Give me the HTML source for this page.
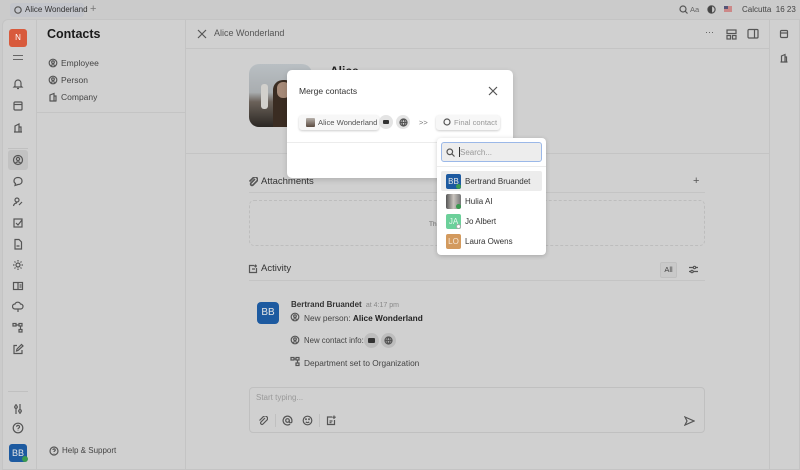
<!DOCTYPE html>
<html><head><meta charset="utf-8"><style>
*{box-sizing:border-box;margin:0;padding:0}
body{width:800px;height:470px;overflow:hidden;background:#cbcbcb;font-family:"Liberation Sans",sans-serif;font-size:8px;color:#333;position:relative}
.a{position:absolute}
svg{position:absolute;fill:none;stroke:#555;stroke-width:1.2}
.t{position:absolute;white-space:nowrap}
</style></head><body>
<div class="a" style="left:10px;top:3px;width:74px;height:14px;background:#c4c6cc;border-radius:3px"></div>
<svg style="left:14px;top:6px" width="8" height="8"><circle cx="4" cy="4" r="3.2"/></svg>
<div class="t" style="left:25px;top:4.5px;font-size:8px;color:#333">Alice Wonderland</div>
<div class="t" style="left:90px;top:3px;font-size:11px;color:#777">+</div>
<svg style="left:679px;top:5px" width="9" height="9"><circle cx="4" cy="4" r="3"/><path d="M6 6l2.5 2.5"/></svg>
<div class="t" style="left:690px;top:5px;font-size:7.5px;color:#666">Aa</div>
<svg style="left:707px;top:5px" width="9" height="9"><circle cx="4.5" cy="4.5" r="3.6"/><path d="M4.5 1v7" /></svg>
<div class="a" style="left:708px;top:6px;width:4px;height:7px;background:#444;border-radius:4px 0 0 4px"></div>
<div class="a" style="left:724px;top:6px;width:8px;height:6px;background:#c88;"></div>
<div class="a" style="left:724px;top:6px;width:4px;height:3px;background:#557"></div>
<div class="t" style="left:742px;top:5px;font-size:8px;color:#444">Calcutta&nbsp; 16 23</div>

<div class="a" style="left:2px;top:19px;width:798px;height:451px;background:#d0d0d0;border-radius:6px 0 0 0;border:1px solid #c4c4c4"></div>
<div class="a" style="left:36px;top:20px;width:1px;height:450px;background:#c4c4c4"></div>
<div class="a" style="left:9px;top:29px;width:18px;height:18px;background:#d85a3c;border-radius:3px;color:#fff;font-size:8px;text-align:center;line-height:18px">N</div>
<div class="a" style="left:13px;top:55px;width:10px;height:1px;background:#666"></div>
<div class="a" style="left:13px;top:59px;width:10px;height:1px;background:#666"></div>
<svg style="left:12px;top:78px" width="12" height="12"><path d="M3 8V5a3 3 0 016 0v3l1 1H2zM5 10.5h2"/></svg>
<svg style="left:12px;top:100px" width="12" height="12"><rect x="2" y="2" width="8" height="8" rx="1"/><path d="M2 4.5h8"/></svg>
<svg style="left:12px;top:122px" width="12" height="12"><path d="M3 10V4l4-2v8M7 5h2v5M2 10h8"/></svg>
<div class="a" style="left:8px;top:148px;width:20px;height:1px;background:#c0c0c0"></div>
<div class="a" style="left:8px;top:150px;width:20px;height:20px;background:#c2c2c2;border-radius:3px"></div>
<svg style="left:12px;top:154px" width="12" height="12"><circle cx="6" cy="6" r="4.5"/><circle cx="6" cy="5" r="1.6"/><path d="M3.3 9.3c1.5-2 3.9-2 5.4 0"/></svg>
<svg style="left:12px;top:175px" width="12" height="12"><path d="M2 6c0-2.5 2-3.5 4-3.5s4 1 4 3.5-2 3.5-4 3.5L3 10.5l.5-2C2.5 8 2 7 2 6z"/></svg>
<svg style="left:12px;top:196px" width="12" height="12"><circle cx="5" cy="4" r="2"/><path d="M1.5 10c.5-2.5 2-3 3.5-3M7 9l3-3"/></svg>
<svg style="left:12px;top:217px" width="12" height="12"><rect x="2" y="2" width="8" height="8"/><path d="M4 6l2 2 4-5"/></svg>
<svg style="left:12px;top:238px" width="12" height="12"><path d="M3 1.5h4l2.5 2.5v7H3z M4.5 8h3"/></svg>
<svg style="left:12px;top:259px" width="12" height="12"><circle cx="6" cy="6" r="2"/><path d="M6 1v1.5M6 9.5V11M1 6h1.5M9.5 6H11M2.5 2.5l1 1M8.5 8.5l1 1M2.5 9.5l1-1M8.5 3.5l1-1"/></svg>
<svg style="left:12px;top:280px" width="12" height="12"><rect x="1.5" y="2.5" width="9" height="7"/><path d="M6 2.5v7M7.5 5h2M7.5 7h2"/></svg>
<svg style="left:12px;top:301px" width="12" height="12"><path d="M3 8a2.5 2.5 0 010-5 3 3 0 015.5 0 2.5 2.5 0 010 5zM6 8v3"/></svg>
<svg style="left:12px;top:322px" width="12" height="12"><rect x="1" y="1.5" width="3" height="2.5"/><rect x="7" y="1.5" width="3" height="2.5"/><rect x="7" y="7.5" width="3" height="2.5"/><path d="M4 3h3M8.5 4v3.5"/></svg>
<svg style="left:12px;top:343px" width="12" height="12"><path d="M5 2.5H2v8h8V7M4.5 8l.5-2 4.5-4.5 1.5 1.5L6 7.5z"/></svg>
<div class="a" style="left:8px;top:391px;width:20px;height:1px;background:#c0c0c0"></div>
<svg style="left:12px;top:403px" width="12" height="12"><path d="M4 1v10M8 1v10"/><circle cx="4" cy="4" r="1.3" fill="#d0d0d0"/><circle cx="8" cy="8" r="1.3" fill="#d0d0d0"/></svg>
<svg style="left:12px;top:422px" width="12" height="12"><circle cx="6" cy="6" r="4.8"/><path d="M4.7 4.8a1.4 1.4 0 112 1.2c-.5.3-.7.6-.7 1.2M6 8.6v.4"/></svg>
<div class="a" style="left:9px;top:444px;width:18px;height:18px;background:#1d5aa0;border-radius:3px;color:#e5e5e5;font-size:9px;text-align:center;line-height:18px">BB</div>
<div class="a" style="left:22px;top:456px;width:6px;height:6px;background:#3a9a50;border-radius:50%"></div>

<div class="a" style="left:185px;top:20px;width:1px;height:450px;background:#c4c4c4"></div>
<div class="t" style="left:47px;top:27px;font-size:12.5px;font-weight:bold;color:#1a1a1a">Contacts</div>
<svg style="left:48px;top:58px" width="10" height="10"><circle cx="5" cy="5" r="3.8"/><circle cx="5" cy="4.2" r="1.3"/><path d="M2.8 7.8c1.2-1.5 3.2-1.5 4.4 0"/></svg>
<div class="t" style="left:61px;top:58px;font-size:8.5px;color:#444">Employee</div>
<svg style="left:48px;top:75px" width="10" height="10"><circle cx="5" cy="5" r="3.8"/><circle cx="5" cy="4.2" r="1.3"/><path d="M2.8 7.8c1.2-1.5 3.2-1.5 4.4 0"/></svg>
<div class="t" style="left:61px;top:75px;font-size:8.5px;color:#444">Person</div>
<svg style="left:48px;top:92px" width="10" height="10"><path d="M2 9V3l4-1.5V9M6 4h2v5M1.5 9h7"/></svg>
<div class="t" style="left:61px;top:92px;font-size:8.5px;color:#444">Company</div>
<div class="a" style="left:37px;top:112px;width:148px;height:1px;background:#c4c4c4"></div>
<svg style="left:49px;top:446px" width="10" height="10"><circle cx="5" cy="5" r="4"/><path d="M4 4a1.1 1.1 0 111.6 1c-.4.3-.6.5-.6 1M5 7.3v.3"/></svg>
<div class="t" style="left:62px;top:446px;font-size:8px;color:#444">Help &amp; Support</div>

<svg style="left:197px;top:29px" width="10" height="10"><path d="M1 1l8 8M9 1l-8 8"/></svg>
<div class="t" style="left:214px;top:28px;font-size:9px;color:#555">Alice Wonderland</div>
<div class="t" style="left:705px;top:27px;font-size:9px;color:#555">···</div>
<svg style="left:726px;top:29px" width="11" height="11"><rect x="1" y="1" width="9" height="3.5"/><rect x="1" y="6.5" width="3.5" height="3.5"/><rect x="6.5" y="6.5" width="3.5" height="3.5"/></svg>
<svg style="left:747px;top:28px" width="12" height="12"><rect x="1" y="1.5" width="10" height="8.5" rx="1"/><path d="M7.5 1.5v8.5"/></svg>
<div class="a" style="left:186px;top:48px;width:584px;height:1px;background:#c4c4c4"></div>
<div class="a" style="left:769px;top:20px;width:1px;height:450px;background:#c4c4c4"></div>
<svg style="left:779px;top:29px" width="10" height="10"><rect x="1.5" y="1.5" width="7" height="7" rx="1"/><path d="M1.5 4h7"/></svg>
<svg style="left:779px;top:53px" width="10" height="10"><path d="M2.5 9V3l3.5-1.5V9M6 4h1.5v5M1.5 9h7"/></svg>

<div class="a" style="left:249px;top:64px;width:63px;height:63px;border-radius:10px;background:linear-gradient(180deg,#b9bfc3 0%,#a9adb0 45%,#6b625a 60%,#2a2622 100%);overflow:hidden">
 <div class="a" style="left:24px;top:16px;width:22px;height:47px;background:#3a2c22;border-radius:10px 10px 0 0"></div>
 <div class="a" style="left:28px;top:18px;width:13px;height:16px;background:#a68a78;border-radius:6px"></div>
 <div class="a" style="left:12px;top:20px;width:7px;height:25px;background:#d2d0cc;border-radius:3px"></div>
</div>
<div class="t" style="left:330px;top:64px;font-size:12px;font-weight:bold;color:#222;height:6px;overflow:hidden">Alice</div>
<div class="a" style="left:186px;top:153px;width:584px;height:1px;background:#c4c4c4"></div>

<svg style="left:248px;top:177px" width="10" height="10"><path d="M7 2L3 6a1.4 1.4 0 002 2l4-4a2.5 2.5 0 00-3.5-3.5L1.5 4.5" stroke-width="1.6"/></svg>
<div class="t" style="left:261px;top:176px;font-size:9.5px;color:#333">Attachments</div>
<div class="t" style="left:693px;top:175px;font-size:11px;color:#555">+</div>
<div class="a" style="left:249px;top:192px;width:456px;height:1px;background:#c4c4c4"></div>
<div class="a" style="left:249px;top:200px;width:456px;height:46px;border:1px dashed #bdbdbd;border-radius:5px"></div>
<div class="t" style="left:429px;top:221px;font-size:6.5px;color:#666">Th</div>

<svg style="left:248px;top:264px" width="10" height="10"><path d="M6 1.5H1.5v7h7V4M4 5h3M7.5 0.5v3M6 2h3"/></svg>
<div class="t" style="left:261px;top:263px;font-size:9.5px;color:#333">Activity</div>
<div class="a" style="left:660px;top:262px;width:17px;height:16px;border:1px solid #c0c0c0;background:#c9c9c9;border-radius:2px;font-size:7.5px;text-align:center;line-height:14px;color:#444">All</div>
<svg style="left:688px;top:264px" width="11" height="11"><path d="M1 3.5h9M1 7.5h9"/><circle cx="6.5" cy="3.5" r="1.2" fill="#d0d0d0"/><circle cx="4" cy="7.5" r="1.2" fill="#d0d0d0"/></svg>
<div class="a" style="left:249px;top:280px;width:456px;height:1px;background:#c4c4c4"></div>
<div class="a" style="left:257px;top:302px;width:22px;height:22px;background:#1d5aa0;border-radius:4px;color:#e5e5e5;font-size:10px;text-align:center;line-height:22px">BB</div>
<div class="t" style="left:291px;top:300px;font-size:8px;font-weight:bold;color:#333">Bertrand Bruandet <span style="font-weight:normal;color:#888;font-size:7px">&nbsp;at 4:17 pm</span></div>
<svg style="left:290px;top:312px" width="10" height="10"><circle cx="5" cy="5" r="3.8"/><circle cx="5" cy="4.2" r="1.3"/><path d="M2.8 7.8c1.2-1.5 3.2-1.5 4.4 0"/></svg>
<div class="t" style="left:304px;top:312.5px;font-size:8.3px;color:#444">New person: <b style="color:#222">Alice Wonderland</b></div>
<svg style="left:290px;top:335px" width="10" height="10"><circle cx="5" cy="5" r="3.8"/><circle cx="5" cy="4.2" r="1.3"/><path d="M2.8 7.8c1.2-1.5 3.2-1.5 4.4 0"/></svg>
<div class="t" style="left:304px;top:336px;font-size:7.8px;color:#444">New contact info:</div>
<div class="a" style="left:364px;top:333px;width:15px;height:15px;border-radius:50%;background:#bdbdbd"></div>
<div class="a" style="left:368px;top:338px;width:7px;height:5px;background:#333;border-radius:1px"></div>
<div class="a" style="left:381px;top:333px;width:15px;height:15px;border-radius:50%;background:#bdbdbd"></div>
<svg style="left:384px;top:336px" width="9" height="9"><circle cx="4.5" cy="4.5" r="3.5"/><path d="M1 4.5h7M4.5 1c-2 2-2 5 0 7M4.5 1c2 2 2 5 0 7"/></svg>
<svg style="left:290px;top:356px" width="11" height="11"><rect x="1" y="1.5" width="3" height="2.5"/><rect x="6" y="1.5" width="3" height="2.5"/><rect x="6" y="7" width="3" height="2.5"/><path d="M4 3h2M7.5 4v3"/></svg>
<div class="t" style="left:304px;top:357.5px;font-size:8.3px;color:#444">Department set to Organization</div>

<div class="a" style="left:249px;top:387px;width:456px;height:46px;border:1px solid #c0c0c0;border-radius:4px"></div>
<div class="t" style="left:256px;top:393px;font-size:8px;color:#999">Start typing...</div>
<svg style="left:258px;top:416px" width="10" height="10"><path d="M7 2L3 6a1.4 1.4 0 002 2l4-4a2.5 2.5 0 00-3.5-3.5L1.5 4.5"/></svg>
<div class="a" style="left:275px;top:414px;width:1px;height:13px;background:#c0c0c0"></div>
<svg style="left:282px;top:415px" width="11" height="11"><circle cx="5.5" cy="5.5" r="1.8"/><path d="M7.3 5.5v1a1.3 1.3 0 002.6 0v-1a4.4 4.4 0 10-1.8 3.6"/></svg>
<svg style="left:302px;top:415px" width="11" height="11"><circle cx="5.5" cy="5.5" r="4.3"/><path d="M3.8 6.8c1 1 2.4 1 3.4 0"/><circle cx="4" cy="4.3" r=".4"/><circle cx="7" cy="4.3" r=".4"/></svg>
<div class="a" style="left:319px;top:414px;width:1px;height:13px;background:#c0c0c0"></div>
<svg style="left:326px;top:415px" width="11" height="11"><path d="M6 2H1.5v7.5h7V5M3.5 6h3M3.5 7.7h2M8 0.5v3.5M6.3 2.2h3.5"/></svg>
<svg style="left:684px;top:416px" width="11" height="10"><path d="M1 1l9 4-9 4 2-4z"/></svg>

<div class="a" style="left:287px;top:70px;width:226px;height:108px;background:#fff;border-radius:5px;box-shadow:0 2px 6px rgba(0,0,0,.15)"></div>
<div class="t" style="left:299px;top:85.5px;font-size:8.5px;color:#333">Merge contacts</div>
<svg style="left:488px;top:86px" width="10" height="10"><path d="M1 1l8 8M9 1l-8 8"/></svg>
<div class="a" style="left:299px;top:115px;width:80px;height:15px;border-radius:3px;background:#f7f7f7;box-shadow:0 1px 2px rgba(0,0,0,.2)"></div>
<div class="a" style="left:306px;top:118px;width:9px;height:9px;background:linear-gradient(#b8b2ac,#5a4a40);border-radius:1px"></div>
<div class="t" style="left:318px;top:118px;font-size:7.6px;color:#555">Alice Wonderland</div>
<div class="a" style="left:379px;top:115px;width:14px;height:14px;border-radius:50%;background:#e4e4e4"></div>
<div class="a" style="left:383px;top:120px;width:6px;height:4px;background:#333;border-radius:1px"></div>
<div class="a" style="left:396px;top:115px;width:14px;height:14px;border-radius:50%;background:#e4e4e4"></div>
<svg style="left:398.5px;top:117.5px" width="9" height="9"><circle cx="4.5" cy="4.5" r="3.5"/><path d="M1 4.5h7M4.5 1c-2 2-2 5 0 7M4.5 1c2 2 2 5 0 7"/></svg>
<div class="t" style="left:419px;top:118px;font-size:7.5px;color:#777">&gt;&gt;</div>
<div class="a" style="left:436px;top:115px;width:64px;height:15px;border-radius:3px;background:#f7f7f7;box-shadow:0 1px 2px rgba(0,0,0,.2)"></div>
<svg style="left:443px;top:118px" width="8" height="8"><circle cx="4" cy="4" r="3"/></svg>
<div class="t" style="left:454px;top:118px;font-size:7.6px;color:#999">Final contact</div>
<div class="a" style="left:287px;top:142px;width:226px;height:1px;background:#ececec"></div>

<div class="a" style="left:437px;top:138px;width:109px;height:117px;background:#fff;border-radius:4px;box-shadow:0 1px 5px rgba(0,0,0,.2)"></div>
<div class="a" style="left:441px;top:142px;width:101px;height:20px;border:1px solid #9bb8e8;border-radius:3px;background:#ededed"></div>
<svg style="left:446px;top:148px" width="9" height="9"><circle cx="3.8" cy="3.8" r="2.8"/><path d="M6 6l2.5 2.5"/></svg>
<div class="a" style="left:459px;top:147px;width:1px;height:10px;background:#333"></div>
<div class="t" style="left:460px;top:147.5px;font-size:8px;color:#999">Search...</div>
<div class="a" style="left:437px;top:166px;width:109px;height:1px;background:#ececec"></div>
<div class="a" style="left:441px;top:171px;width:101px;height:20px;background:#ececec;border-radius:2px"></div>
<div class="a" style="left:446px;top:174px;width:15px;height:15px;background:#1d5aa0;border-radius:2px;color:#e8e8e8;font-size:8px;text-align:center;line-height:15px">BB</div>
<div class="a" style="left:456px;top:184px;width:5px;height:5px;background:#3a9a50;border-radius:50%"></div>
<div class="t" style="left:465px;top:176.5px;font-size:8px;color:#333">Bertrand Bruandet</div>
<div class="a" style="left:446px;top:194px;width:15px;height:15px;background:linear-gradient(90deg,#555,#c9c4be,#777);border-radius:2px"></div>
<div class="a" style="left:456px;top:204px;width:5px;height:5px;background:#3a9a50;border-radius:50%"></div>
<div class="t" style="left:465px;top:196.5px;font-size:8px;color:#333">Hulia AI</div>
<div class="a" style="left:446px;top:214px;width:15px;height:15px;background:#6cd09a;border-radius:2px;color:#e8f8ee;font-size:8px;text-align:center;line-height:15px">JA</div>
<div class="a" style="left:456px;top:224px;width:5px;height:5px;background:#fff;border:1px solid #aaa;border-radius:50%"></div>
<div class="t" style="left:465px;top:216.5px;font-size:8px;color:#333">Jo Albert</div>
<div class="a" style="left:446px;top:234px;width:15px;height:15px;background:#d39a5e;border-radius:2px;color:#f7e8d8;font-size:8px;text-align:center;line-height:15px">LO</div>
<div class="t" style="left:465px;top:236.5px;font-size:8px;color:#333">Laura Owens</div>
</body></html>
